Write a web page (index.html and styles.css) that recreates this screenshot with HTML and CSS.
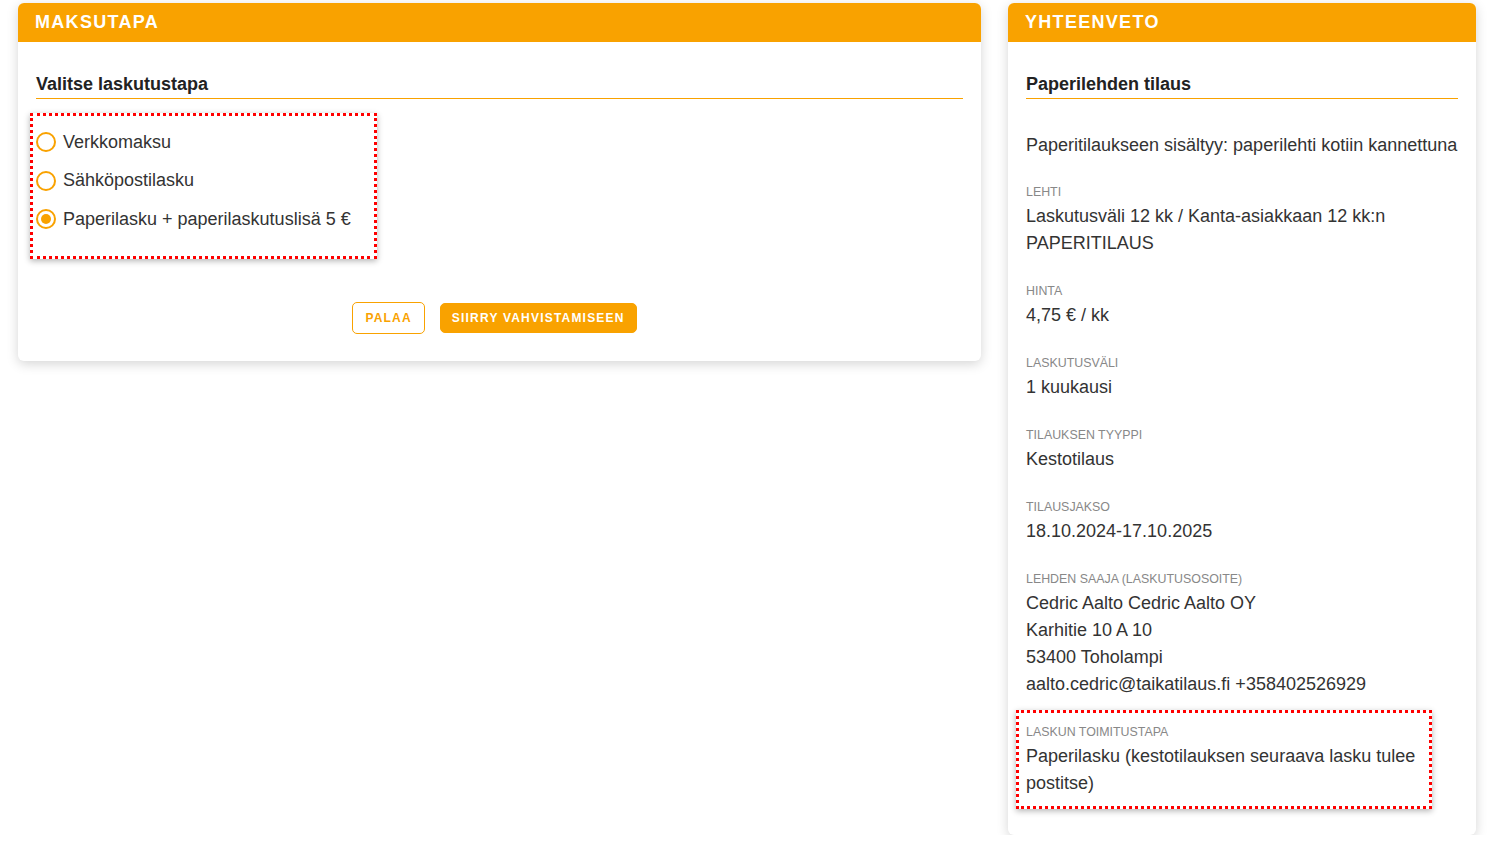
FILE: index.html
```html
<!DOCTYPE html>
<html lang="fi">
<head>
<meta charset="utf-8">
<title>Maksutapa</title>
<link rel="stylesheet" href="styles.css">
</head>
<body>
<div class="page">
  <section class="card card-main">
    <div class="card-head">MAKSUTAPA</div>
    <div class="card-body">
      <h2 class="section-title">Valitse laskutustapa</h2>
      <div class="options">
        <label class="option"><span class="radio"></span><span>Verkkomaksu</span></label>
        <label class="option"><span class="radio"></span><span>Sähköpostilasku</span></label>
        <label class="option"><span class="radio checked"></span><span>Paperilasku + paperilaskutuslisä 5 €</span></label>
        <div class="highlight hl-options"></div>
      </div>
      <div class="actions">
        <button class="btn btn-outline">PALAA</button>
        <button class="btn btn-fill">SIIRRY VAHVISTAMISEEN</button>
      </div>
    </div>
  </section>

  <aside class="card card-side">
    <div class="card-head">YHTEENVETO</div>
    <div class="card-body">
      <h2 class="section-title">Paperilehden tilaus</h2>
      <p class="intro">Paperitilaukseen sisältyy: paperilehti kotiin kannettuna</p>
      <div class="field">
        <div class="label">LEHTI</div>
        <div class="value">Laskutusväli 12 kk / Kanta-asiakkaan 12 kk:n PAPERITILAUS</div>
      </div>
      <div class="field">
        <div class="label">HINTA</div>
        <div class="value">4,75 € / kk</div>
      </div>
      <div class="field">
        <div class="label">LASKUTUSVÄLI</div>
        <div class="value">1 kuukausi</div>
      </div>
      <div class="field">
        <div class="label">TILAUKSEN TYYPPI</div>
        <div class="value">Kestotilaus</div>
      </div>
      <div class="field">
        <div class="label">TILAUSJAKSO</div>
        <div class="value">18.10.2024-17.10.2025</div>
      </div>
      <div class="field">
        <div class="label">LEHDEN SAAJA (LASKUTUSOSOITE)</div>
        <div class="value">Cedric Aalto Cedric Aalto OY<br>Karhitie 10 A 10<br>53400 Toholampi<br>aalto.cedric@taikatilaus.fi +358402526929</div>
      </div>
      <div class="field field-last">
        <div class="label">LASKUN TOIMITUSTAPA</div>
        <div class="value">Paperilasku (kestotilauksen seuraava lasku tulee postitse)</div>
        <div class="highlight hl-delivery"></div>
      </div>
    </div>
  </aside>
</div>
</body>
</html>
```

FILE: styles.css
```css
* { box-sizing: border-box; }

html, body {
  margin: 0;
  padding: 0;
  background: #ffffff;
}

body {
  font-family: "Liberation Sans", Arial, sans-serif;
  color: #333;
}

.page {
  display: flex;
  align-items: flex-start;
  gap: 27px;
  padding: 3px 0 0 18px;
}

.card {
  background: #fff;
  border-radius: 6px;
  box-shadow: 0 3px 12px rgba(0, 0, 0, 0.17);
}

.card-main { width: 963px; }
.card-side { width: 468px; }

.card-head {
  background: #f9a200;
  color: #fff;
  font-weight: 700;
  font-size: 18px;
  letter-spacing: 1.3px;
  height: 39px;
  line-height: 38px;
  padding: 0 17px;
  border-radius: 6px 6px 0 0;
}

.card-body {
  padding: 30px 18px 27px 18px;
}

.section-title {
  margin: 0;
  font-size: 18px;
  line-height: 24px;
  font-weight: 700;
  color: #222;
  padding-bottom: 2px;
  border-bottom: 1px solid #f9a200;
}

/* options */
.options {
  position: relative;
  margin-top: 24px;
  padding-bottom: 20px;
  display: flex;
  flex-direction: column;
}

.option {
  display: flex;
  align-items: center;
  height: 38.5px;
  font-size: 18px;
  color: #333;
  gap: 7px;
}

.radio {
  width: 20px;
  height: 20px;
  border: 2px solid #f9a200;
  border-radius: 50%;
  display: flex;
  align-items: center;
  justify-content: center;
  flex: none;
}

.radio.checked::before {
  content: "";
  width: 10px;
  height: 10px;
  border-radius: 50%;
  background: #f9a200;
}

.highlight {
  position: absolute;
  border: 3px dotted #ff0000;
  box-shadow: 0 2px 6px rgba(0, 0, 0, 0.3);
  pointer-events: none;
}

.hl-options {
  left: -6px;
  top: -10px;
  width: 347px;
  height: 146px;
}

.actions {
  margin-top: 43px;
  display: flex;
  justify-content: center;
  align-items: center;
  gap: 15px;
  padding-right: 10px;
}

.btn {
  font-family: "Liberation Sans", Arial, sans-serif;
  font-size: 12px;
  font-weight: 700;
  letter-spacing: 1.2px;
  border-radius: 5px;
  cursor: pointer;
}

.btn-outline {
  background: #fff;
  color: #f9a200;
  border: 1px solid #f9a200;
  height: 32px;
  padding: 0 12px;
}

.btn-fill {
  background: #f9a200;
  color: #fff;
  border: 1px solid #f9a200;
  height: 30px;
  padding: 0 11px;
}

/* summary */
.intro {
  margin: 33px 0 22px;
  font-size: 18px;
  line-height: 27px;
  color: #333;
}

.field {
  margin-bottom: 23px;
  position: relative;
}

.label {
  font-size: 12.4px;
  line-height: 22px;
  color: #888;
}

.value {
  font-size: 18px;
  line-height: 27px;
  color: #333;
}

.field-last { margin-bottom: 11px; }

.hl-delivery {
  left: -10px;
  top: -11px;
  width: 416px;
  bottom: -12px;
}
```
